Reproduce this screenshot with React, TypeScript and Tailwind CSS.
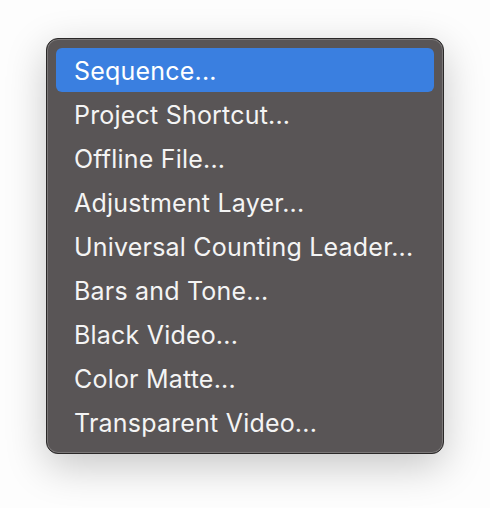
import React from 'react';

const items = [
  'Sequence...',
  'Project Shortcut...',
  'Offline File...',
  'Adjustment Layer...',
  'Universal Counting Leader...',
  'Bars and Tone...',
  'Black Video...',
  'Color Matte...',
  'Transparent Video...',
];

export default function App() {
  return (
    <div className="w-[490px] h-[508px] bg-[#fdfdfd] pt-[38px] pl-[46px]" style={{ fontFamily: 'Inter, "Noto Sans", sans-serif' }}>
      <div className="w-[398px] rounded-[12px] bg-[#595556] border border-[#2a2828] p-[9px] shadow-[0_12px_40px_rgba(0,0,0,0.22),inset_0_0_0_1px_rgba(255,255,255,0.2)]">
        {items.map((label, i) => (
          <div
            key={label}
            className={`h-[44px] flex items-center pl-[18px] pt-[3px] rounded-[6px] text-[25px] tracking-[0.2px] text-[#f4f4f4] ${i === 0 ? 'bg-[#3a7fe0] text-white' : ''}`}
          >
            {label}
          </div>
        ))}
      </div>
    </div>
  );
}
